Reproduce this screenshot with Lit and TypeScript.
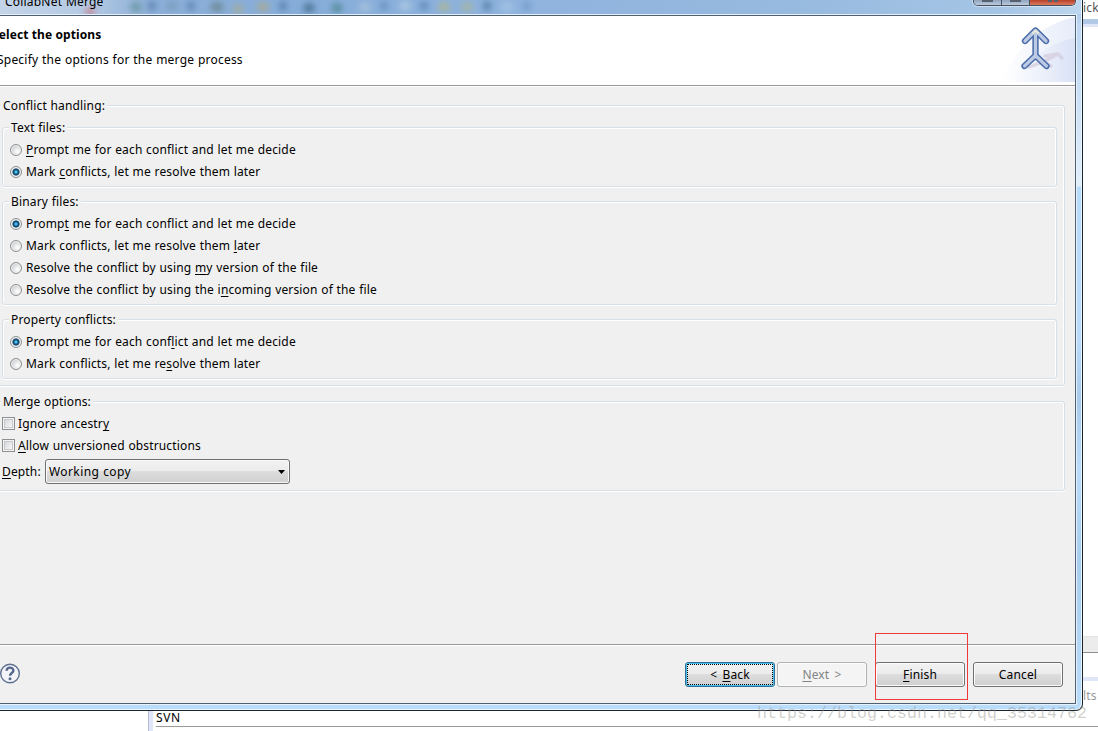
import { css, html, LitElement, svg } from "lit";
import { customElement, property } from "lit/decorators.js";
import { classMap } from "lit/directives/class-map.js";

// "&" marks the mnemonic, as in the native labels
const mnemonic = (text: string) => {
  const i = text.indexOf("&");
  if (i < 0) return html`${text}`;
  return html`${text.slice(0, i)}<u>${text[i + 1]}</u>${text.slice(i + 2)}`;
};

interface Option {
  label: string;
  checked?: boolean;
}

interface ConflictGroup {
  title: string;
  options: Option[];
}

const GROUPS: ConflictGroup[] = [
  {
    title: "Text files:",
    options: [
      { label: "&Prompt me for each conflict and let me decide" },
      { label: "Mark &conflicts, let me resolve them later", checked: true },
    ],
  },
  {
    title: "Binary files:",
    options: [
      { label: "Promp&t me for each conflict and let me decide", checked: true },
      { label: "Mark conflicts, let me resolve them &later" },
      { label: "Resolve the conflict by using &my version of the file" },
      { label: "Resolve the conflict by using the i&ncoming version of the file" },
    ],
  },
  {
    title: "Property conflicts:",
    options: [
      { label: "Prompt me for each conf&lict and let me decide", checked: true },
      { label: "Mark conflicts, let me re&solve them later" },
    ],
  },
];

// toolbar icons of the window behind, seen through the glass
const GLASS_SPOTS = [
  { x: 90, y: 12, r: 5, c: "#c08c9c" },
  { x: 136, y: 7, r: 6, c: "#6f9ba8" },
  { x: 152, y: 6, r: 4, c: "#5f86b4" },
  { x: 172, y: 6, r: 6, c: "#7c9fc0" },
  { x: 191, y: 6, r: 4, c: "#5f86b4" },
  { x: 217, y: 7, r: 7, c: "#708d9c" },
  { x: 238, y: 9, r: 5, c: "#a3ac9f" },
  { x: 263, y: 7, r: 6, c: "#a5a99a" },
  { x: 283, y: 6, r: 4, c: "#5c82b0" },
  { x: 309, y: 8, r: 6, c: "#4f789a" },
  { x: 337, y: 8, r: 6, c: "#5a8f9f" },
  { x: 365, y: 7, r: 6, c: "#a4c0dc" },
  { x: 384, y: 6, r: 4, c: "#6b92c0" },
  { x: 405, y: 6, r: 6, c: "#a9c6e0" },
  { x: 424, y: 6, r: 4, c: "#6189b8" },
  { x: 444, y: 7, r: 6, c: "#a9b59f" },
  { x: 467, y: 7, r: 6, c: "#a4b5a8" },
  { x: 487, y: 6, r: 4, c: "#5580a8" },
  { x: 507, y: 7, r: 6, c: "#a3c3e4" },
  { x: 527, y: 6, r: 4, c: "#769cca" },
];

@customElement("option-row")
export class OptionRow extends LitElement {
  static styles = css`
    :host {
      display: flex;
      align-items: center;
      height: 22px;
      white-space: pre;
    }

    .radio {
      box-sizing: border-box;
      width: 12px;
      height: 12px;
      margin-right: 4px;
      border: 1px solid #8e8f8f;
      border-radius: 50%;
      background: radial-gradient(circle at 65% 65%, #fafafa 10%, #d4d7da 60%, #c4c8cc);
      box-shadow: inset 0 0 0 1px #f2f2f2;
    }

    .radio.checked {
      background: radial-gradient(
        circle at 50% 50%,
        #4fc0ea 0 0.8px,
        #1c6d9c 1.8px,
        #123a5c 3.2px,
        #e8ecef 4px
      );
    }

    .check {
      box-sizing: border-box;
      width: 13px;
      height: 13px;
      margin: 0 3px 1px 0;
      border: 1px solid #8e8f8f;
      background: linear-gradient(135deg, #cbcfd5, #f6f6f6 80%);
      box-shadow:
        inset 0 0 0 1px #f4f4f4,
        inset 0 0 0 2px #c6cacf;
    }

    u {
      text-decoration-thickness: 1px;
      text-underline-offset: 2px;
      text-decoration-skip-ink: none;
    }
  `;

  @property() label = "";
  @property() kind: "radio" | "check" = "radio";
  @property({ type: Boolean }) checked = false;

  render() {
    return html`
      <span class=${classMap({ [this.kind]: true, checked: this.checked })}></span>
      <span>${mnemonic(this.label)}</span>
    `;
  }
}

@customElement("group-box")
export class GroupBox extends LitElement {
  static styles = css`
    :host {
      display: block;
      border: 1px solid #d5dfe5;
      border-radius: 3px;
      box-shadow:
        inset 1px 1px #fff,
        inset -1px 0 #fff,
        0 1px #fff;
    }

    .legend {
      width: max-content;
      height: 22px;
      line-height: 22px;
      margin: -11px 0 0 6px;
      padding: 0 2px;
      background: #f0f0f0;
      white-space: pre;
    }
  `;

  @property() heading = "";

  render() {
    return html`
      <div class="legend">${this.heading}</div>
      <slot></slot>
    `;
  }
}

@customElement("app-root")
export class AppRoot extends LitElement {
  static styles = css`
    :host {
      display: block;
      position: relative;
      width: 1098px;
      height: 731px;
      overflow: hidden;
      background: #fff;
      color: #000;
      font: 12px/16px "Noto Sans", "Open Sans", sans-serif;
      letter-spacing: 0.15px;
      word-spacing: 0.4px;
    }

    u {
      text-decoration-thickness: 1px;
      text-underline-offset: 2px;
      text-decoration-skip-ink: none;
    }

    /* window behind the dialog */
    .backdrop {
      display: flex;
      flex-direction: column;
      height: 731px;
    }

    .side {
      width: 15px;
      margin-left: 1083px;
      height: 711px;
      display: flex;
      flex-direction: column;
      overflow: hidden;
    }

    .side .tab {
      height: 19px;
      line-height: 15px;
      color: #555;
    }

    .side .band {
      height: 5px;
      background: #b1c9e5;
    }

    .side .band-light {
      height: 3px;
      background: #dfe6f7;
    }

    .side .gap {
      flex: 1;
    }

    .side .status {
      height: 15px;
      background: #ececec;
      border-top: 1px solid #e4e4e4;
      border-bottom: 1px solid #8f8f8f;
    }

    .side .pane {
      height: 24px;
    }

    .side .pane-line {
      height: 4px;
      background: #dfe6f7;
    }

    .side .results {
      height: 30px;
      line-height: 30px;
      color: #999;
    }

    .bottom {
      display: flex;
      height: 20px;
      padding-left: 148px;
    }

    .sash {
      width: 4px;
      border-left: 1px solid #b4bcd4;
      background: #dfe6f7;
    }

    .console {
      flex: 1;
      height: 15px;
      line-height: 14px;
      margin-left: 3px;
      border-bottom: 1px solid #999;
      letter-spacing: 0.6px;
    }

    /* dialog window, cut by the left and top screen edges */
    .dialog {
      position: absolute;
      left: 0;
      top: 0;
      width: 1083px;
      height: 711px;
      box-sizing: border-box;
      border-right: 1px solid #1b2530;
      border-bottom: 1px solid #1b2530;
      border-bottom-right-radius: 7px;
      background: linear-gradient(
        to bottom,
        #a6c4e4 0,
        #bdd7f3 26px,
        #c9dff6 90px,
        #e2effb 186px,
        #b7dbfb 187px,
        #b9dafa 340px,
        #a8cbec 400px,
        #b9dcfb 470px,
        #a9cdee 560px,
        #b9dcfb 100%
      );
      box-shadow: inset -1px -1px #e9f5ff;
    }

    .titlebar {
      display: flex;
      justify-content: space-between;
      position: relative;
      height: 14px;
      width: 1081px;
      background: linear-gradient(
        to right,
        #c4d4e8 0,
        #b3c9e3 90px,
        #8cafd8 150px,
        #86add9 300px,
        #90b4de 560px,
        #97badf 800px,
        #a5c5e5 1000px,
        #bcd6ee 1081px
      );
    }

    .spots {
      position: absolute;
      left: 0;
      top: 0;
    }

    .title {
      position: relative;
      margin-left: 5px;
      line-height: 3px;
      letter-spacing: 0.2px;
    }

    .controls {
      position: relative;
      display: flex;
      box-sizing: border-box;
      width: 103px;
      height: 6px;
      margin-right: 5px;
      border: 1px solid #46505e;
      border-top: 0;
      border-radius: 0 0 5px 5px;
      box-shadow: 0 0 0 1px rgba(255, 255, 255, 0.45);
      overflow: hidden;
    }

    .control {
      display: flex;
      justify-content: center;
      width: 27px;
      background: linear-gradient(#8fa4bd, #bccbdd);
      border-right: 1px solid #46505e;
    }

    .control.close {
      flex: 1;
      gap: 2px;
      border: 0;
      background: linear-gradient(#b8402a, #da7a60);
    }

    .glyph {
      width: 11px;
      height: 2px;
      background: #56606e;
    }

    .close .glyph {
      width: 4px;
    }

    .client {
      display: flex;
      flex-direction: column;
      box-sizing: border-box;
      width: 1077px;
      height: 691px;
      border: 1px solid #e6f1fb;
      border-left: 0;
    }

    .frame {
      display: flex;
      flex-direction: column;
      box-sizing: border-box;
      height: 689px;
      width: 1076px;
      border: 1px solid #4f6073;
      border-left: 0;
      background: #f0f0f0;
    }

    .header {
      display: flex;
      justify-content: space-between;
      height: 69px;
      background: #fff;
      border-bottom: 1px solid #999;
      box-shadow: 0 1px #fff;
    }

    .header h1 {
      margin: 11px 0 0 -8px;
      font-size: 12px;
      line-height: 16px;
      letter-spacing: 0.1px;
      word-spacing: 0;
    }

    .header p {
      margin: 9px 0 0 -3px;
      letter-spacing: 0.21px;
    }

    .body {
      height: 539px;
      padding-top: 19px;
      margin-left: -6px;
      width: 1071px;
    }

    .conflicts {
      padding-bottom: 6px;
    }

    .group {
      margin: 14px 7px 0 7px;
      padding-bottom: 3px;
    }

    .group:first-child {
      margin-top: 10px;
    }

    .group option-row {
      padding-left: 7px;
    }

    .merge {
      margin-top: 15px;
      padding-bottom: 6px;
    }

    .merge option-row {
      padding-left: 7px;
    }

    .depth {
      display: flex;
      align-items: center;
      margin: 2px 0 0 7px;
    }

    .depth-label {
      width: 43px;
    }

    .combo {
      display: flex;
      align-items: center;
      justify-content: space-between;
      box-sizing: border-box;
      width: 245px;
      height: 25px;
      padding: 0 4px 0 3px;
      border: 1px solid #707070;
      border-radius: 3px;
      background: linear-gradient(#f2f2f2, #ebebeb 48%, #dddddd 50%, #cfcfcf);
      box-shadow: inset 0 0 0 1px #f9f9f9;
      letter-spacing: 0.4px;
    }

    .footer {
      display: flex;
      flex: 1;
      align-items: flex-start;
      border-top: 1px solid #999;
      box-shadow: inset 0 1px #fff;
    }

    .help {
      margin-top: 18px;
      width: 685px;
      height: 22px;
    }

    .button {
      box-sizing: border-box;
      width: 90px;
      height: 25px;
      margin: 17px 8px 0 0;
      border: 1px solid #707070;
      border-radius: 3px;
      background: linear-gradient(#f2f2f2, #ebebeb 48%, #dddddd 50%, #cfcfcf);
      box-shadow: inset 0 0 0 1px #fcfcfc;
      text-align: center;
      line-height: 23px;
      word-spacing: 2px;
    }

    .button.focused {
      margin-right: 2px;
      padding: 1px;
      border-color: #2c6f96;
      box-shadow: inset 0 0 0 1px #48c0ee;
    }

    .button.focused .focus {
      display: block;
      box-sizing: border-box;
      height: 21px;
      border: 1px dotted #000;
      line-height: 19px;
    }

    .button.disabled {
      border-color: #adb2b5;
      background: #f4f4f4;
      color: #838383;
    }

    .marker {
      position: absolute;
      left: 875px;
      top: 633px;
      box-sizing: border-box;
      width: 93px;
      height: 67px;
      border: 1px solid #f03a3a;
    }

    .watermark {
      position: absolute;
      left: 757px;
      top: 704px;
      font: 16.6px/20px "Liberation Mono", monospace;
      letter-spacing: 0.04px;
      color: rgba(150, 150, 140, 0.45);
    }
  `;

  private _renderSpots() {
    return svg`
      <filter id="glass" x="-80%" y="-80%" width="260%" height="260%">
        <feGaussianBlur stdDeviation="3"></feGaussianBlur>
      </filter>
      ${GLASS_SPOTS.map(
        (s) => svg`<ellipse cx=${s.x} cy=${s.y} rx=${s.r} ry="5" fill=${s.c} filter="url(#glass)"></ellipse>`
      )}
    `;
  }

  private _renderBanner() {
    return html`
      <svg width="75" height="66" viewBox="1000 16 75 66">
        <defs>
          <linearGradient id="sweep" x1="0" y1="0" x2="1" y2="0">
            <stop offset="0" stop-color="#fff"></stop>
            <stop offset="1" stop-color="#e6ecf9"></stop>
          </linearGradient>
          <linearGradient id="sweep2" x1="0" y1="0" x2="1" y2="0">
            <stop offset="0" stop-color="#f4f7fd" stop-opacity="0"></stop>
            <stop offset="1" stop-color="#d9e1f5"></stop>
          </linearGradient>
        </defs>
        <path d="M1000 82C1015 50 1040 24 1075 17V82Z" fill="url(#sweep)"></path>
        <path d="M1010 82C1025 62 1048 43 1075 38V82Z" fill="url(#sweep2)"></path>
        <g fill="none" stroke-linecap="round" stroke-linejoin="round">
          <path
            d="M1029 67L1043 62L1058 54M1045 56L1058 54L1062 58M1043 62L1051 66"
            stroke="#d3cbdc"
            stroke-width="3.400"
            opacity=".7"
          ></path>
          <path
            d="M1035.500 31V57M1025 41L1035.500 30.500L1046 41M1024.500 66L1035.500 55.500L1046.500 66"
            stroke="#4a6cab"
            stroke-width="6.300"
          ></path>
          <path
            d="M1035.500 31V57M1025 41L1035.500 30.500L1046 41M1024.500 66L1035.500 55.500L1046.500 66"
            stroke="#bccae3"
            stroke-width="3.200"
          ></path>
          <path d="M1033 33L1035.500 30.500L1038 33" stroke="#e6ead8" stroke-width="2"></path>
        </g>
      </svg>
    `;
  }

  render() {
    return html`
      <div class="backdrop">
        <div class="side">
          <div class="tab">ick</div>
          <div class="band"></div>
          <div class="band-light"></div>
          <div class="gap"></div>
          <div class="status"></div>
          <div class="pane"></div>
          <div class="pane-line"></div>
          <div class="results">lts</div>
        </div>
        <div class="bottom">
          <div class="sash"></div>
          <div class="console">SVN</div>
        </div>
      </div>

      <div class="dialog">
        <div class="titlebar">
          <svg class="spots" width="560" height="14">${this._renderSpots()}</svg>
          <div class="title">CollabNet Merge</div>
          <div class="controls">
            <div class="control"><div class="glyph"></div></div>
            <div class="control"><div class="glyph"></div></div>
            <div class="control close">
              <div class="glyph"></div>
              <div class="glyph"></div>
            </div>
          </div>
        </div>
        <div class="client">
          <div class="frame">
            <div class="header">
              <div>
                <h1>Select the options</h1>
                <p>Specify the options for the merge process</p>
              </div>
              ${this._renderBanner()}
            </div>
            <div class="body">
              <group-box class="conflicts" heading="Conflict handling:">
                ${GROUPS.map(
                  (g) => html`
                    <group-box class="group" heading=${g.title}>
                      ${g.options.map(
                        (o) => html`<option-row .label=${o.label} ?checked=${o.checked}></option-row>`
                      )}
                    </group-box>
                  `
                )}
              </group-box>
              <group-box class="merge" heading="Merge options:">
                <option-row kind="check" label="Ignore ancestr&amp;y"></option-row>
                <option-row kind="check" label="&amp;Allow unversioned obstructions"></option-row>
                <div class="depth">
                  <span class="depth-label">${mnemonic("&Depth:")}</span>
                  <div class="combo">
                    <span>Working copy</span>
                    <svg width="7" height="4"><path d="M0 0H7L3.500 4Z"></path></svg>
                  </div>
                </div>
              </group-box>
            </div>
            <div class="footer">
              <svg class="help" viewBox="0 0 685 22">
                <circle cx="10" cy="10.500" r="9.300" fill="#f4f5f8" stroke="#5f7191" stroke-width="1.400"></circle>
                <path
                  d="M6.600 7.800C6.600 3.600 13.400 3.600 13.400 7.600C13.400 10 10 9.900 10 12.800"
                  fill="none"
                  stroke="#55688c"
                  stroke-width="2.400"
                ></path>
                <circle cx="10" cy="15.800" r="1.500" fill="#55688c"></circle>
              </svg>
              <div class="button focused"><span class="focus">${mnemonic("< &Back")}</span></div>
              <div class="button disabled">${mnemonic("&Next >")}</div>
              <div class="button">${mnemonic("&Finish")}</div>
              <div class="button">Cancel</div>
            </div>
          </div>
        </div>
      </div>

      <div class="marker"></div>
      <div class="watermark">https://blog.csdn.net/qq_35314762</div>
    `;
  }
}
